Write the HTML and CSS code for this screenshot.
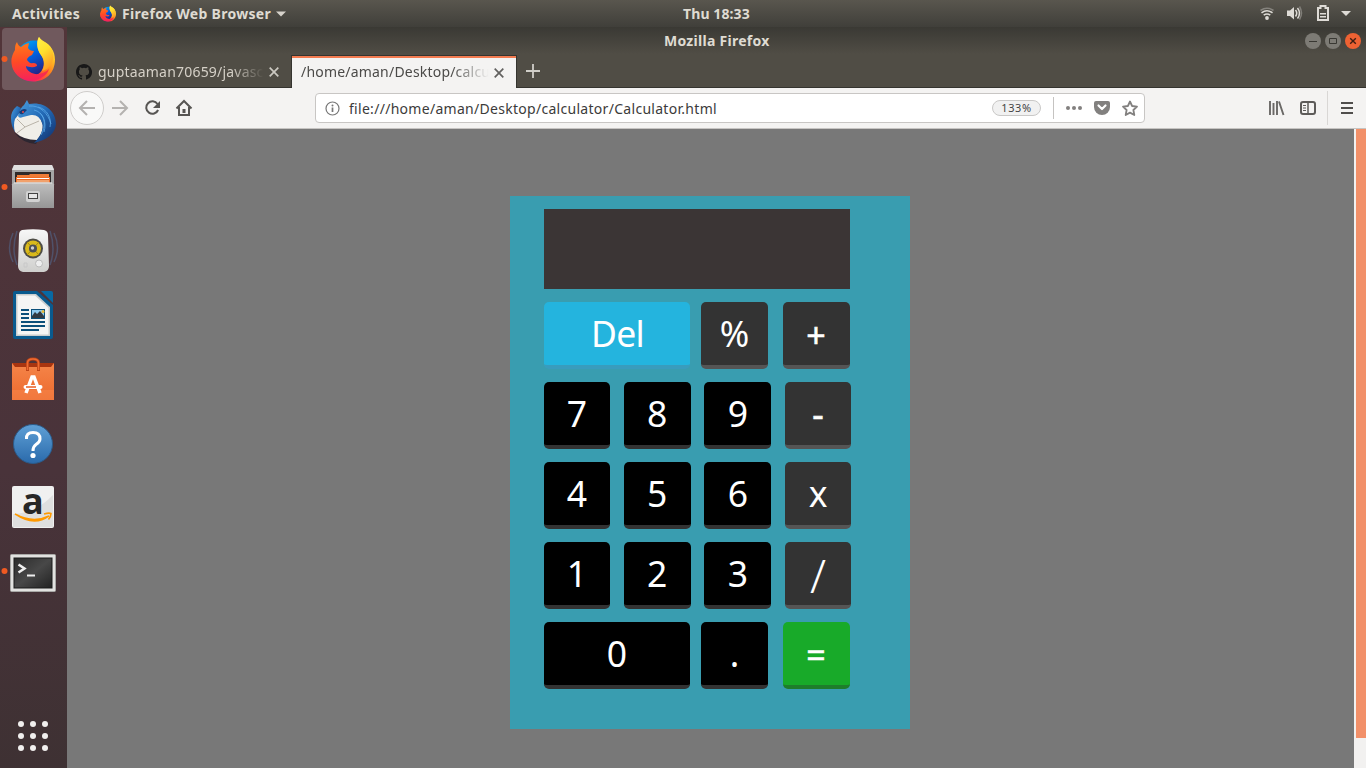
FILE: index.html
```html
<!DOCTYPE html>
<html lang="en">
<head>
<meta charset="utf-8">
<title>Calculator</title>
<link rel="stylesheet" href="styles.css">
</head>
<body>
<svg width="0" height="0" class="defs">
  <defs>
    <linearGradient id="ffBody" x1="0.9" y1="0.05" x2="0.2" y2="0.9"><stop offset="0" stop-color="#fff14a"/><stop offset=".3" stop-color="#ffbd25"/><stop offset=".55" stop-color="#ff7a1e"/><stop offset=".8" stop-color="#ff3545"/><stop offset="1" stop-color="#e31587"/></linearGradient>
    <linearGradient id="ffBlue" x1="0" y1="0" x2=".6" y2="1"><stop offset="0" stop-color="#00b8f5"/><stop offset=".5" stop-color="#0060df"/><stop offset="1" stop-color="#2b1a78"/></linearGradient>
    <linearGradient id="ffTail" x1="0" y1="0" x2=".4" y2="1"><stop offset="0" stop-color="#fff04a"/><stop offset=".5" stop-color="#ffe02e"/><stop offset="1" stop-color="#ffa025"/></linearGradient>
    <linearGradient id="ffLeft" x1=".3" y1="0" x2=".4" y2="1"><stop offset="0" stop-color="#ff7a1c"/><stop offset=".5" stop-color="#ff4a25"/><stop offset="1" stop-color="#f5225b"/></linearGradient>
    <linearGradient id="tb" x1="0" y1="0" x2="1" y2="1"><stop offset="0" stop-color="#4a9fe0"/><stop offset=".5" stop-color="#2268b4"/><stop offset="1" stop-color="#102c66"/></linearGradient>
    <linearGradient id="grey" x1="0" y1="0" x2="0" y2="1"><stop offset="0" stop-color="#bfbfbf"/><stop offset="1" stop-color="#969696"/></linearGradient>
    <linearGradient id="white" x1="0" y1="0" x2="0" y2="1"><stop offset="0" stop-color="#f7f7f7"/><stop offset="1" stop-color="#cfcfcd"/></linearGradient>
    <linearGradient id="bag" x1="0" y1="0" x2="0" y2="1"><stop offset="0" stop-color="#f58549"/><stop offset="1" stop-color="#ec6a2e"/></linearGradient>
    <linearGradient id="help" x1="0" y1="0" x2="0" y2="1"><stop offset="0" stop-color="#5fa0d6"/><stop offset="1" stop-color="#2a6aab"/></linearGradient>
    <linearGradient id="term" x1="0" y1="0" x2="1" y2="1"><stop offset="0" stop-color="#2b2b2b"/><stop offset=".5" stop-color="#484848"/><stop offset="1" stop-color="#222"/></linearGradient>
    <symbol id="firefox" viewBox="0 0 44 46">
      <circle cx="23" cy="23" r="18.500" fill="url(#ffBlue)"/>
      <path d="M28 1C25 6 26 14 30 19c5 7 3 17-5 20-9 3-18-3-18-12L1 21C-1 34 8 45.500 22 45.500c13 0 22-9 22-22C44 15 39 9 34 6c-3-2-5-3-6-5z" fill="url(#ffBody)"/>
      <path d="M6 6C4 9 4 11 4 14 0 20-1 28 3 35c6 10 18 12 27 7 4-2 7-5 8-9-6 5-13 7-19 3-3-2-4-4-4-6 3 1 7 2 11 0 0-2-1-3-4-3-3 1-4-1-6-3 0-2 2-4 5-5l2-4c-3 0-5-1-6-3l1-5c-5 1-6 3-8 4-2-1-3-2-4-5z" fill="url(#ffLeft)"/>
      <path d="M28 1c-3 5-2 13 2 18 4 5 4 11 1 16 8-2 12-9 11-17C41 11 37 8 33 6c-3-2-4-3-5-5z" fill="url(#ffTail)"/>
    </symbol>
  </defs>
</svg>
<div class="desktop">
  <header class="topbar">
    <span class="activities">Activities</span>
    <svg class="app-icon" width="16" height="17" viewBox="0 0 44 46"><use href="#firefox"/></svg>
    <span class="app-name">Firefox Web Browser</span>
    <svg class="app-caret" width="10" height="6" viewBox="0 0 10 6"><path d="M0 .5h10L5 5.500z" fill="#d6d2cb"/></svg>
    <span class="clock">Thu 18:33</span>
    <svg class="status" width="92" height="20" viewBox="1259 4 92 20">
      <g fill="none" stroke="#dedbd6" stroke-width="1.600"><path d="M1260.500 10.500q6.500-4.500 13 0" stroke="#85837d"/><path d="M1261.500 12.800q5.500-4 11 0"/><path d="M1263.700 15.200q3.300-2.400 6.600 0"/></g>
      <circle cx="1267" cy="18" r="1.900" fill="#dedbd6"/>
      <path d="M1287 10.500h3l4-3.500v12.500l-4-3.500h-3z" fill="#dedbd6"/>
      <path d="M1295.500 10q2.500 3 0 6.500M1297.500 8q4 5 0 10.500" fill="none" stroke="#dedbd6" stroke-width="1.500"/><path d="M1299.500 6.500q4 6.500 0 13" fill="none" stroke="#807e78" stroke-width="1.500"/>
      <path d="M1320.500 6h5v2h2.500v12h-10V8h2.500z" fill="none" stroke="#dedbd6" stroke-width="2"/>
      <path d="M1320 13h6v1.500h-6zM1320 16h6v1.500h-6z" fill="#dedbd6"/>
      <path d="M1341 11h10l-5 5z" fill="#dedbd6"/>
    </svg>
  </header>
  <div class="workspace">
    <nav class="dock">
      <svg width="67" height="64" viewBox="0 27 67 64"><rect x="2" y="28" width="62" height="62" rx="4" fill="#70595d"/><circle cx="4.500" cy="59" r="3" fill="#f05a22"/><svg x="11" y="36" width="44" height="46" viewBox="0 0 44 46"><use href="#firefox"/></svg></svg>
      <svg width="67" height="64" viewBox="0 91 67 64">
        <path d="M11 118q0-7 6-12l4 2q-5 9-2 23l-4 1q-4-6-4-14z" fill="url(#tb)"/>
        <path d="M14 132q9 9 26 5l-4 7q-14-1-22-12z" fill="#2c2630"/>
        <path d="M15 119l4-5 20 1 4 10q0 8-6 15-14 0-22-8-2-7 0-13z" fill="#f0eee8"/>
        <path d="M17 119l8 8 14-6M25 127l-8 6" fill="none" stroke="#b9b3a8"/>
        <path d="M18 116q2-8 6-11l3-5 2 4c14-3 27 6 27 20q-1 14-22 19c7-7 10-14 8-20q-3-9-11-8l-8 2q-4 2-5-1z" fill="url(#tb)"/>
        <path d="M29 106c11-1 19 7 22 18m-17-14c9 2 13 12 10 22m-6-25c9 2 14 11 12 20m-10-14c5 5 6 13 1 22" fill="none" stroke="#5aa8e8" stroke-width=".8"/>
        <path d="M19 112q4-5 8-2l-4 4q-3 1-4-2z" fill="#173b78"/><circle cx="23" cy="112" r="1" fill="#e24a4a"/>
      </svg>
      <svg width="67" height="64" viewBox="0 155 67 64">
        <circle cx="4.500" cy="187" r="3" fill="#f05a22"/>
        <path d="M14 165h38l2 4v38H12v-38z" fill="#a5a5a5"/><path d="M14 165h38l2 5H12z" fill="#e0e0e0"/>
        <rect x="15" y="172" width="36" height="12" fill="#302a2a"/><path d="M17 175h12l1-1h19v3H17z" fill="#ef7b36"/><path d="M16 177h34v6H16z" fill="#ed6b26"/><path d="M17 178.500h32" stroke="#fff"/><path d="M17 180h32v3H17z" fill="#f1a16c"/>
        <path d="M14 182.500h38l2 2V208H12v-23.500z" fill="url(#grey)"/><path d="M14 183h38" stroke="#e5e5e5"/>
        <rect x="26" y="191" width="14" height="11" rx="2" fill="#d2d2d2"/><rect x="28.500" y="193.500" width="9" height="5" fill="#e7e7e7" stroke="#444"/>
      </svg>
      <svg width="67" height="64" viewBox="0 219 67 64">
        <g fill="none" stroke="#526182" stroke-width="1.500" opacity=".65"><path d="M17 231q-6 18 0 34M13 233q-7 15 0 29M50 231q6 18 0 34M54 233q7 15 0 29"/></g>
        <path d="M22 230q11-1.500 22 0 4 1 4 5l1 31q0 5-5 6H23q-5-1-5-6l1-31q0-4 3-5z" fill="url(#white)"/>
        <circle cx="33" cy="248.500" r="10" fill="#4d4c46"/><circle cx="33" cy="248.500" r="8" fill="#d9b91b"/><path d="M27 242l12 13M39 242l-12 13" stroke="#a18811"/><circle cx="33" cy="248.500" r="4" fill="#4b4e55"/><circle cx="32.500" cy="248" r="1.700" fill="#d0d0d0"/><circle cx="39" cy="263.500" r="3.500" fill="#eee" stroke="#bbb"/><path d="M24 263h3v4h-3z" fill="none" stroke="#c8c8c8"/>
      </svg>
      <svg width="67" height="64" viewBox="0 283 67 64">
        <path d="M15 291h22l16 14v32q0 2-2 2H15q-2 0-2-2v-44q0-2 2-2z" fill="#095a8e"/><path d="M41 291h10q2 0 2 2v10z" fill="#0869a3"/>
        <path d="M16 294h20l14 13v29H16z" fill="#c9cccd"/><path d="M17.500 295.500H35L48.500 308v26.500h-31z" fill="#f5f5f4"/>
        <path d="M21 310h8M21 314h8M21 318h8M21 322h24M21 326h24M21 330h18" stroke="#0b4f7a" stroke-width="2"/><rect x="31.500" y="309.500" width="13" height="9" fill="#8ec9ef" stroke="#0b4f7a"/><path d="M32 318v-2l3-4 2 2 3-3 4 5v2z" fill="#313942"/><circle cx="43" cy="311.500" r="1.500" fill="#e8bb38"/>
      </svg>
      <svg width="67" height="64" viewBox="0 347 67 64">
        <path d="M12 363h42v5H12z" fill="#a83510"/><path d="M12 363l3 4h36l3-4v37H12z" fill="url(#bag)"/><path d="M12 390h42v10H12z" fill="#fb925a" opacity=".35"/>
        <path d="M27.500 371v-8q0-4 5.500-4t5.500 4v8" fill="none" stroke="#bd4417" stroke-width="3"/><path d="M27.500 370v-7q0-4 5.500-4t5.500 4v7" fill="none" stroke="#ef6b32" stroke-width="1.500"/>
        <path d="M26 393l6-16h2l6 16" fill="none" stroke="#fff" stroke-width="3.500"/><path d="M25.500 387h15" stroke="#fff" stroke-width="4" stroke-linecap="round"/><path d="M26 387h10" stroke="#e85d22" stroke-width="1.500"/>
      </svg>
      <svg width="67" height="64" viewBox="0 411 67 64">
        <circle cx="33" cy="444" r="19.500" fill="url(#help)" stroke="#2b5a88"/>
        <path d="M26.500 439q-.5-6.500 6.500-6.500t7 6.500q0 3-4 5.500-3 2-3 6.500" fill="none" stroke="#fff" stroke-width="3"/><circle cx="33" cy="455.500" r="2.600" fill="#fff"/>
      </svg>
      <svg width="67" height="64" viewBox="0 475 67 64">
        <rect x="12" y="486" width="42" height="42" rx="2" fill="#f0f0f0"/><path d="M13 514q23-1 40-19v32H13z" fill="#dfdfdf"/>
        <text x="22" y="514" class="amazon-a" fill="#272727">a</text>
        <path d="M15 514q18 10 34 2-15 11-34-2z" fill="#f90" stroke="#f90" stroke-width="1.500"/><path d="M44 514q5-1.500 7-.5 0 3-2.500 6" fill="none" stroke="#f90" stroke-width="1.600"/>
      </svg>
      <svg width="67" height="64" viewBox="0 539 67 64">
        <circle cx="4.500" cy="571" r="3" fill="#f05a22"/>
        <rect x="10.500" y="554.500" width="45" height="37" rx="1" fill="#e2e2e0" stroke="#a9a9a7"/><rect x="14" y="558" width="38" height="30" fill="url(#term)" stroke="#1b1b1b"/>
        <path d="M18.500 564.500l6 4-6 4" fill="none" stroke="#eee" stroke-width="2.500"/><path d="M27 575.500h8" stroke="#eee" stroke-width="2"/>
      </svg>
      <svg class="apps" width="67" height="64" viewBox="0 704 67 64"><g fill="#f1efee"><circle cx="21" cy="724" r="3"/><circle cx="33" cy="724" r="3"/><circle cx="45" cy="724" r="3"/><circle cx="21" cy="736" r="3"/><circle cx="33" cy="736" r="3"/><circle cx="45" cy="736" r="3"/><circle cx="21" cy="748" r="3"/><circle cx="33" cy="748" r="3"/><circle cx="45" cy="748" r="3"/></g></svg>
    </nav>
    <main class="window">
      <div class="titlebar">
        <span class="title">Mozilla Firefox</span>
        <svg class="controls" width="58" height="20" viewBox="1304 31 58 20">
          <circle cx="1313" cy="41" r="8" fill="#7d7b75"/><circle cx="1333" cy="41" r="8" fill="#7d7b75"/><circle cx="1353" cy="41" r="8" fill="#ee6233"/>
          <path d="M1309 41.500h8M1329.500 38.500h7v5h-7z" fill="none" stroke="#393833"/><path d="M1350.200 38.200l5.600 5.600m0-5.600l-5.600 5.600" stroke="#3d1d12" stroke-width="1.400"/>
        </svg>
      </div>
      <div class="tabs">
        <div class="tab">
          <svg width="16" height="16" viewBox="0 0 16 16"><path d="M8 0C3.580 0 0 3.580 0 8c0 3.540 2.290 6.530 5.470 7.590.4.070.55-.17.55-.38v-1.490c-2.230.48-2.700-.95-2.700-.95-.36-.92-.89-1.170-.89-1.170-.73-.5.060-.49.060-.49.8.06 1.230.83 1.230.83.72 1.230 1.880.87 2.340.67.070-.52.280-.88.510-1.080-1.780-.2-3.640-.89-3.640-3.950 0-.87.310-1.590.82-2.150-.08-.2-.36-1.020.08-2.120 0 0 .67-.21 2.200.82a7.500 7.500 0 0 1 4 0c1.530-1.040 2.200-.82 2.200-.82.44 1.100.16 1.920.08 2.120.51.560.82 1.270.82 2.150 0 3.070-1.870 3.750-3.650 3.950.29.250.54.730.54 1.480v2.200c0 .21.150.46.550.38A8 8 0 0 0 8 0z" fill="#181818"/></svg>
          <span class="tab-label label-repo">guptaaman70659/javasc</span>
          <svg class="tab-close" width="10" height="10" viewBox="0 0 10 10"><path d="M.7.700l8.600 8.600m0-8.600L.7 9.300" stroke="#ccc9c2" stroke-width="1.700"/></svg>
        </div>
        <div class="tab active">
          <span class="tab-label label-file">/home/aman/Desktop/calcu</span>
          <svg class="tab-close" width="10" height="10" viewBox="0 0 10 10"><path d="M.7.700l8.600 8.600m0-8.600L.7 9.300" stroke="#62615f" stroke-width="1.700"/></svg>
        </div>
        <svg class="new-tab" width="14" height="14" viewBox="0 0 14 14"><path d="M7 0v14M0 7h14" stroke="#d0cec8" stroke-width="1.800"/></svg>
      </div>
      <div class="toolbar">
        <svg class="nav-icons" width="130" height="40" viewBox="67 88 130 40">
          <circle cx="87" cy="108" r="16.500" fill="#f9f9f8" stroke="#cfcdcb"/>
          <path d="M95 108H80m7-7l-7 7 7 7" fill="none" stroke="#b4b2b0" stroke-width="2"/>
          <path d="M112 108h15m-7-7l7 7-7 7" fill="none" stroke="#b4b2b0" stroke-width="2"/>
          <path d="M157.500 104a6.200 6.200 0 1 0 .6 6" fill="none" stroke="#575553" stroke-width="2"/><path d="M160 101v7h-7z" fill="#575553"/>
          <path d="M176.500 108.500l7.500-7.500 7.500 7.500M179 107v8h10v-8" fill="none" stroke="#575553" stroke-width="2"/><rect x="182.500" y="109" width="3" height="4" fill="#575553"/>
        </svg>
        <div class="urlbar">
          <svg width="15" height="15" viewBox="0 0 15 15"><circle cx="7.500" cy="7.500" r="6.500" fill="none" stroke="#777" stroke-width="1.200"/><path d="M7.500 6.500V11" stroke="#777" stroke-width="1.700"/><circle cx="7.500" cy="4.400" r="1" fill="#777"/></svg>
          <span class="url">file:///home/aman/Desktop/calculator/Calculator.html</span>
          <span class="zoom-level">133%</span>
          <svg class="url-actions" width="92" height="26" viewBox="1052 95 92 26">
            <path d="M1053.500 97v22" stroke="#c5c3c1"/><g fill="#82807f"><circle cx="1068" cy="108" r="2"/><circle cx="1074" cy="108" r="2"/><circle cx="1080" cy="108" r="2"/><path d="M1096 101h12q2 0 2 2v4a8 8 0 0 1-16 0v-4q0-2 2-2z"/></g>
            <path d="M1098.500 105.500l3.500 3.500 3.500-3.500" fill="none" stroke="#fff" stroke-width="2.200" stroke-linecap="round" stroke-linejoin="round"/>
            <path d="M1130 101.500l2.100 4.500 4.900.6-3.600 3.400.9 5-4.300-2.400-4.300 2.400.9-5-3.600-3.400 4.900-.6z" fill="none" stroke="#82807f" stroke-width="1.800" stroke-linejoin="round"/>
          </svg>
        </div>
        <svg class="menu-icons" width="100" height="40" viewBox="1266 88 100 40">
          <path d="M1270 101v14M1273.500 103v12M1277 101v14M1279 101.500l4.500 13.500" fill="none" stroke="#6a6866" stroke-width="1.900"/>
          <rect x="1301" y="102" width="14" height="12" rx="2" fill="none" stroke="#5d5b59" stroke-width="2"/><path d="M1308 102v12" stroke="#5d5b59" stroke-width="1.500"/><path d="M1303 105.500h3M1303 108h3M1303 110.500h3" stroke="#5d5b59"/>
          <path d="M1327.500 91v34" stroke="#d9d7d5"/><path d="M1341 103h12M1341 108h12M1341 113h12" stroke="#504e4c" stroke-width="2"/>
        </svg>
      </div>
      <div class="viewport">
        <div class="page">
          <section class="calculator">
            <div class="screen"></div>
            <div class="row wide"><button class="key del">Del</button><button class="key op">%</button><button class="key op sign">+</button></div>
            <div class="row"><button class="key">7</button><button class="key">8</button><button class="key">9</button><button class="key op minus">-</button></div>
            <div class="row"><button class="key">4</button><button class="key">5</button><button class="key">6</button><button class="key op">x</button></div>
            <div class="row"><button class="key">1</button><button class="key">2</button><button class="key">3</button><button class="key op slash">/</button></div>
            <div class="row wide"><button class="key">0</button><button class="key">.</button><button class="key equals sign">=</button></div>
          </section>
        </div>
        <div class="scrollbar"><div class="thumb"></div></div>
      </div>
    </main>
  </div>
</div>
</body>
</html>
```
FILE: styles.css
```css
* { box-sizing: border-box; }
body { margin: 0; overflow: hidden; font-family: "Noto Sans", "Open Sans", sans-serif; }
svg { display: block; flex: none; }
span { white-space: nowrap; }
.defs { position: absolute; }
.desktop { width: 1366px; height: 768px; display: flex; flex-direction: column; background: #787878; }
.topbar { height: 27px; flex: none; display: flex; align-items: center; background: linear-gradient(#59564e, #403f3a); color: #dfdbd2; font-size: 14px; font-weight: 700; line-height: 27px; }
.activities { width: 88px; padding-left: 12px; letter-spacing: .3px; }
.app-icon { margin-left: 12px; }
.app-name { width: 154px; margin-left: 6px; letter-spacing: .3px; }
.clock { margin-left: 397px; width: 576px; margin-top: -1px; letter-spacing: .1px; }
.workspace { flex: 1; min-height: 0; display: flex; }
.dock { width: 67px; flex: none; display: flex; flex-direction: column; background: linear-gradient(#523539, #49333a 60%, #3e3133); }
.apps { margin-top: auto; }
.window { flex: 1; min-width: 0; display: flex; flex-direction: column; }
.titlebar { height: 27px; flex: none; display: flex; align-items: center; justify-content: space-between; padding: 0 4px 0 597px; background: linear-gradient(#3a3934, #504d45); color: #dfdbd2; font-size: 14px; font-weight: 700; letter-spacing: .28px; }
.tabs { height: 34px; flex: none; display: flex; background: #504d45; border-bottom: 1px solid #35342f; }
.tab { width: 224px; height: 34px; display: flex; align-items: center; padding: 2px 12px 0 9px; color: #d5d0c7; font-size: 14px; line-height: 20px; letter-spacing: .2px; }
.label-file { margin-top: -2px; }
.active { width: 226px; margin-top: 1px; padding-top: 0; background: #f4f3f2; border: 1px solid #35342f; border-width: 1px 1px 0; box-shadow: inset 0 2px #f37b50; color: #4b4a48; }
.tab-label { -webkit-mask-image: linear-gradient(90deg, #000 80%, transparent); mask-image: linear-gradient(90deg, #000 80%, transparent); }
.label-repo { width: 166px; margin-left: 6px; }
.label-file { width: 188px; }
.tab-close { margin-left: auto; }
.new-tab { margin: 10px 0 0 9px; }
.toolbar { height: 41px; flex: none; display: flex; align-items: center; background: #f4f3f2; border-bottom: 1px solid #c6c4c2; }
.urlbar { width: 830px; height: 30px; margin-left: 118px; display: flex; align-items: center; padding-left: 9px; background: #fff; border: 1px solid #c8c6c4; border-radius: 4px; }
.url { margin-left: 9px; width: 643px; color: #3c3b3a; font-size: 14px; letter-spacing: .29px; }
.zoom-level { width: 49px; height: 16px; border: 1px solid #c9c8c7; border-radius: 8px; background: #f1f1f1; color: #444; font-size: 11px; line-height: 14px; letter-spacing: .6px; text-align: center; }
.url-actions { margin-left: auto; }
.menu-icons { margin-left: auto; }
.viewport { flex: 1; min-height: 0; display: flex; }
.page { width: 1287px; padding: 67px 0 0 443px; background: #787878; }
.calculator { width: 400px; height: 533px; padding: 13px 0 0 34px; background: #399db0; }
.screen { width: 306px; height: 80px; margin-bottom: 13px; background: #3b3535; }
.row { display: grid; grid-template-columns: 66px 67px 67px 66px; column-gap: 13.7px; height: 67px; margin-bottom: 13px; }
.wide { grid-template-columns: 157px 82px 67px; column-gap: 0; }
.wide .key { width: 67px; }
.wide .key:first-child { width: 146px; }
.key { min-width: 0; height: 67px; padding: 0 0 1px; border: 0; border-bottom: 4px solid #333; border-radius: 5px; background: #000; color: #fff; font: 35.5px/60px "Noto Sans", sans-serif; text-align: center; }
.op { background: #333; border-bottom-color: #555; }
.del { background: #24b4de; border-bottom-color: #399cbd; letter-spacing: -.7px; text-indent: 1px; }
.equals { background: #18aa29; border-bottom-color: #1e7d2b; }
.sign { padding: 2px 1px 0 0; font-size: 34px; -webkit-text-stroke: .6px #fff; }
.minus { -webkit-text-stroke: .6px #fff; }
.slash { padding-top: 3px; font-size: 46px; font-weight: 300; }
.scrollbar { width: 12px; padding-left: 2px; background: #f2f1f0; }
.thumb { height: 609px; background: #f29069; }
.amazon-a { font: 700 36px "Open Sans", sans-serif; }
```
